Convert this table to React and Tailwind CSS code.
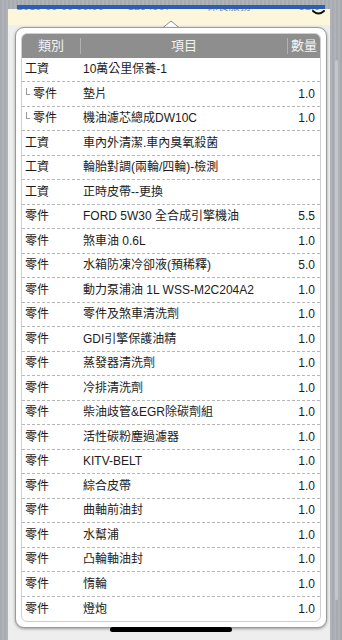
import React from 'react';

const rows = [
  { type: '工資', name: '10萬公里保養-1', qty: '' },
  { type: '零件', name: '墊片', qty: '1.0', sub: true },
  { type: '零件', name: '機油濾芯總成DW10C', qty: '1.0', sub: true },
  { type: '工資', name: '車內外清潔.車內臭氧殺菌', qty: '' },
  { type: '工資', name: '輪胎對調(兩輪/四輪)-檢測', qty: '' },
  { type: '工資', name: '正時皮帶--更換', qty: '' },
  { type: '零件', name: 'FORD 5W30 全合成引擎機油', qty: '5.5' },
  { type: '零件', name: '煞車油 0.6L', qty: '1.0' },
  { type: '零件', name: '水箱防凍冷卻液(預稀釋)', qty: '5.0' },
  { type: '零件', name: '動力泵浦油 1L WSS-M2C204A2', qty: '1.0' },
  { type: '零件', name: '零件及煞車清洗劑', qty: '1.0' },
  { type: '零件', name: 'GDI引擎保護油精', qty: '1.0' },
  { type: '零件', name: '蒸發器清洗劑', qty: '1.0' },
  { type: '零件', name: '冷排清洗劑', qty: '1.0' },
  { type: '零件', name: '柴油歧管&EGR除碳劑組', qty: '1.0' },
  { type: '零件', name: '活性碳粉塵過濾器', qty: '1.0' },
  { type: '零件', name: 'KITV-BELT', qty: '1.0' },
  { type: '零件', name: '綜合皮帶', qty: '1.0' },
  { type: '零件', name: '曲軸前油封', qty: '1.0' },
  { type: '零件', name: '水幫浦', qty: '1.0' },
  { type: '零件', name: '凸輪軸油封', qty: '1.0' },
  { type: '零件', name: '惰輪', qty: '1.0' },
  { type: '零件', name: '燈炮', qty: '1.0' },
];

const App = () => {
  return (
    <div className="relative h-[640px] w-[342px] overflow-hidden bg-[repeating-linear-gradient(90deg,#a7aaae_0px,#a7aaae_2px,#afb2b6_2px,#afb2b6_4px)] font-['Liberation_Sans','Noto_Sans_CJK_TC',sans-serif]">
      {/* background page, mostly hidden by the popover */}
      <div className="flex h-full flex-col pt-[5px]">
        <div className="ml-[17px] mr-[17px] h-[4px] bg-[#2c5fb3]" />
        <div className="ml-[8px] mr-[12px] flex flex-1 flex-col bg-[#eeeeee]">
          <div className="relative h-[16px] overflow-hidden bg-[#fcf7dc]">
            <div className="mt-[-10px] flex items-start text-[11px] leading-[14px] text-[#8a8a8a]">
              <span className="ml-[9px]">2019-09-09 09:00</span>
              <span className="ml-[24px]">1234567</span>
              <span className="ml-[36px]">保養服務</span>
              <span className="ml-[48px]">31.0</span>
            </div>
            <svg className="absolute left-[304px] top-[1px]" width="13" height="6" viewBox="0 0 13 6">
              <path d="M1 1 Q6.5 6 12 1" fill="none" stroke="#111" strokeWidth="2" strokeLinecap="round" />
            </svg>
          </div>
        </div>
      </div>

      {/* right scroll strip */}
      <div className="absolute right-[4px] top-[60px] h-[540px] w-[3px] rounded-full bg-[#c4c7ca]" />

      {/* popover arrow */}
      <svg className="absolute left-[162px] top-[20px]" width="18" height="9" viewBox="0 0 18 9">
        <path d="M0 8.5 L9 1 L18 8.5 Z" fill="#ffffff" />
        <path d="M0.5 8 L9 1 L17.5 8" fill="none" stroke="#8d8d8d" strokeWidth="1" />
      </svg>

      {/* popover */}
      <div className="absolute left-[15px] top-[27px] w-[312px] rounded-[9px] border border-[#9a9a9a] bg-white p-[5px] shadow-[0_1px_3px_rgba(0,0,0,0.35)]">
        <div className="overflow-hidden rounded-[6px] border border-[#cfcfcf] bg-white">
          {/* header */}
          <div className="flex h-[23.5px] items-center bg-[#8e8e8e] text-[13px] text-[#f2f2f2]">
            <div className="w-[58px] text-center">類別</div>
            <div className="h-[16px] w-px bg-[#b0b0b0]" />
            <div className="flex-1 text-center">項目</div>
            <div className="h-[16px] w-px bg-[#b0b0b0]" />
            <div className="w-[32px] text-center">數量</div>
          </div>
          {/* rows */}
          {rows.map((row, index) => (
            <div
              key={index}
              className={
                index === rows.length - 1
                  ? 'flex h-[24.5px] items-center text-[12px] text-[#1c1c1c]'
                  : 'flex h-[24.5px] items-center border-b border-dashed border-[#b8b8b8] text-[12px] text-[#1c1c1c]'
              }
            >
              <div className="flex w-[58px] items-center pl-[3px]">
                {row.sub && (
                  <span className="mb-[5px] ml-[1px] mr-[3px] h-[7px] w-[4px] border-b border-l border-[#9a9a9a]" />
                )}
                <span>{row.type}</span>
              </div>
              <div className="flex-1 whitespace-nowrap pl-[3px]">{row.name}</div>
              <div className="w-[40px] pr-[5px] text-right">{row.qty}</div>
            </div>
          ))}
        </div>
      </div>

      {/* home indicator */}
      <div className="absolute left-[110px] top-[627px] h-[5px] w-[122px] rounded-full bg-black" />
    </div>
  );
};

export default App;
